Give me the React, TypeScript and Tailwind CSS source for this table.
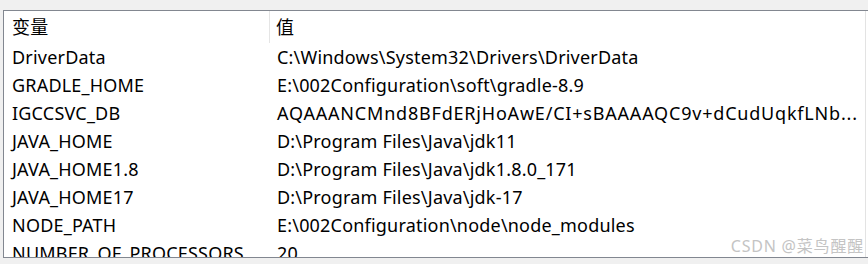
import React from 'react';

const rows: [string, string][] = [
  ['DriverData', 'C:\\Windows\\System32\\Drivers\\DriverData'],
  ['GRADLE_HOME', 'E:\\002Configuration\\soft\\gradle-8.9'],
  ['IGCCSVC_DB', 'AQAAANCMnd8BFdERjHoAwE/CI+sBAAAAQC9v+dCudUqkfLNb...'],
  ['JAVA_HOME', 'D:\\Program Files\\Java\\jdk11'],
  ['JAVA_HOME1.8', 'D:\\Program Files\\Java\\jdk1.8.0_171'],
  ['JAVA_HOME17', 'D:\\Program Files\\Java\\jdk-17'],
  ['NODE_PATH', 'E:\\002Configuration\\node\\node_modules'],
  ['NUMBER_OF_PROCESSORS', '20'],
];

export default function App() {
  return (
    <div
      className="w-[868px] h-[264px] bg-[#f0f0f0] pt-[10px] pl-[3px] overflow-hidden"
      style={{ fontFamily: '"Noto Sans", "Noto Sans CJK SC", sans-serif' }}
    >
      <div className="relative h-[248px] w-[865px] bg-white border-l border-t border-b border-[#828790] overflow-hidden text-[18px] leading-[24px] tracking-[0.2px] text-black">
        <div className="flex h-[32px] items-center">
          <div className="w-[266px] pl-[8px] h-full flex items-center border-r border-[#e5e5e5]">变量</div>
          <div className="pl-[6px]">值</div>
        </div>
        {rows.map(([k, v]) => (
          <div key={k} className="flex h-[28px] items-center">
            <div className="w-[267px] shrink-0 pl-[8px] whitespace-nowrap">{k}</div>
            <div className={k === 'IGCCSVC_DB' ? 'pl-[6px] whitespace-nowrap tracking-[0.8px]' : 'pl-[6px] whitespace-nowrap'}>{v}</div>
          </div>
        ))}
        <div className="absolute right-[2px] top-0 bottom-0 w-px bg-[#e3e3e3]" />
        <div className="absolute right-[4px] bottom-[1px] text-[16px] leading-[20px] text-[#c4c4c4] tracking-[0.8px]">CSDN @菜鸟醒醒</div>
      </div>
    </div>
  );
}
